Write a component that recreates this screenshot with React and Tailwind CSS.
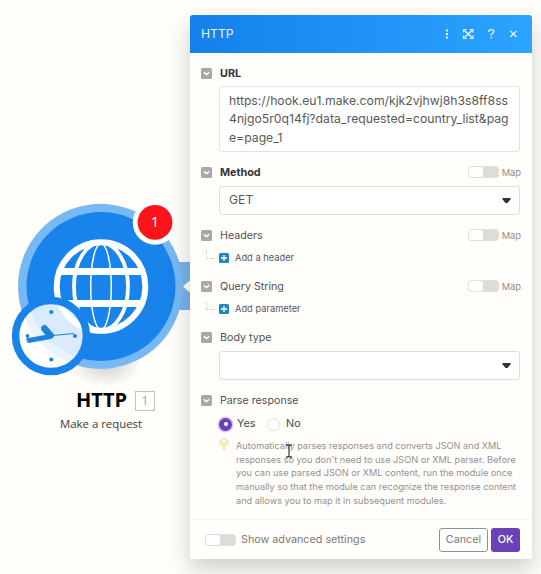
import React from 'react';

function Chevron() {
  return (
    <svg className="mr-2 h-[11px] w-[11px] shrink-0" viewBox="0 0 11 11">
      <rect width="11" height="11" rx="1.6" fill="#aaa8a6" />
      <path d="M2.8 4.4 5.5 6.6 8.2 4.4" fill="none" stroke="#fff" strokeWidth="1.4" />
    </svg>
  );
}

function Toggle() {
  return (
    <span className="flex h-[12px] w-[31px] shrink-0 rounded-[3px] border border-[#e2e0de] bg-[#dddcda]">
      <span className="h-full w-[14px] rounded-[2px] bg-white" />
    </span>
  );
}

function Label({ text, bold, map }) {
  return (
    <div className="flex h-[14px] items-center pl-[11px] pr-[11px]">
      <Chevron />
      <span className={bold ? 'pt-[2px] text-[10.8px] leading-[14px] font-bold text-[#333]' : 'pt-[2px] text-[10.7px] leading-[14px] text-[#53514f]'}>{text}</span>
      {map && (
        <span className="ml-auto flex items-center gap-[3px] text-[9.3px] text-[#918f8d]">
          <Toggle />
          <span className="pt-px">Map</span>
        </span>
      )}
    </div>
  );
}

function SelectBox({ value }) {
  return (
    <div className="ml-[29px] mr-[12px] mt-[7px] flex h-[29px] items-center justify-between rounded-[3px] border border-[#e3dcda] bg-white pl-[9px] pr-[8px] text-[12.2px] text-[#5b5957]">
      <span>{value}</span>
      <svg className="h-[5px] w-[9px]" viewBox="0 0 9 5">
        <path d="M.5 0h8v1.300L5.500 5h-2L.5 1.300z" fill="#333" />
      </svg>
    </div>
  );
}

function AddRow({ text }) {
  return (
    <div className="mt-[8px] flex h-[15px] items-center pl-[16px] text-[9.3px] text-[#5a5856]">
      <span className="mb-[7px] h-[9px] w-[8px] border-b border-l border-dotted border-[#cfcbc8]" />
      <svg className="ml-[5px] mr-[6px] h-[10px] w-[10px]" viewBox="0 0 10 10">
        <rect width="10" height="10" rx="1.5" fill="#2087bd" />
        <path d="M5 2v6M2 5h6" stroke="#fff" strokeWidth="1.3" />
      </svg>
      {text}
    </div>
  );
}

function HeaderIcons() {
  return (
    <svg className="h-[14px] w-[78px]" viewBox="0 0 78 14" fill="none" stroke="#e8f6ff">
      <g fill="#e8f6ff" stroke="none">
        <rect x="3" y="2.500" width="2" height="2" />
        <rect x="3" y="6" width="2" height="2" />
        <rect x="3" y="9.500" width="2" height="2" />
      </g>
      <path d="M20.500 5.500V2.500H23.700M26.900 2.500H29.900V5.500M29.900 8.500v3h-3M23.700 11.500h-3.200V8.500" strokeWidth="1.200" />
      <path d="M21.500 3.500l7.400 7M28.900 3.500l-7.400 7" strokeWidth="1.500" />
      <path d="M45.600 4.800c.2-1.500 1.200-2.200 2.500-2.200 1.500 0 2.600.8 2.600 2.100 0 1.800-2.600 1.800-2.600 4M48.100 10v1.600" strokeWidth="1.400" />
      <path d="m67.300 3.900 6.100 6.100M73.400 3.900 67.300 10" strokeWidth="1.300" />
    </svg>
  );
}

function NodeGraphic() {
  return (
    <svg className="block h-[389px] w-[191px]" viewBox="0 0 191 389">
      <defs>
        <radialGradient id="shade">
          <stop offset="0" stopColor="#555" stopOpacity=".28" />
          <stop offset="1" stopColor="#555" stopOpacity="0" />
        </radialGradient>
      </defs>
      <ellipse cx="106" cy="364" rx="36" ry="23" fill="url(#shade)" />
      <path d="M174 262h17v18l-8 6.500 8 6.500v17h-17z" fill="#76b3ea" />
      <path d="M191 279.500v14l-8-7z" fill="#fffefb" />
      <circle cx="100.500" cy="286.300" r="82.500" fill="#77b9f4" />
      <circle cx="101" cy="286.500" r="74.500" fill="#1783eb" />
      <g fill="none" stroke="#fff">
        <circle cx="101" cy="286.500" r="44.300" strokeWidth="6" />
        <ellipse cx="101" cy="286.500" rx="27" ry="44" strokeWidth="3.800" />
        <ellipse cx="101" cy="286.500" rx="10.300" ry="43" strokeWidth="1.500" />
        <path d="M59 271.500h84M59 303.500h84" strokeWidth="7" />
      </g>
      <circle cx="155" cy="222.500" r="22.300" fill="#fff" />
      <circle cx="155" cy="222.300" r="17.400" fill="#fb151b" />
      <text x="155" y="227" textAnchor="middle" fontSize="15" fill="#fff" fontFamily="Open Sans, Noto Sans, sans-serif">1</text>
      <circle cx="51" cy="336" r="35.400" fill="#fff" fillOpacity=".84" stroke="#1783eb" strokeWidth="7.500" />
      <g fill="#1b82de" stroke="#1b82de">
        <circle cx="51.300" cy="312" r="2" stroke="none" />
        <circle cx="51.300" cy="359.600" r="2" stroke="none" />
        <path d="M26.500 338.800 46 335.200 41.500 329.500Q41 325 45.500 325.200L53.500 334.200Q54 338 51 338.600L28 342.700Z" strokeWidth=".8" strokeLinejoin="round" />
        <path d="M53 335.500l21-2" strokeWidth="1.100" />
        <circle cx="27.500" cy="336" r="1.900" stroke="none" />
        <circle cx="75" cy="336" r="2.100" stroke="none" />
      </g>
    </svg>
  );
}

const hint = [
  'Automatically parses responses and converts JSON and XML',
  "responses so you don't need to use JSON or XML parser. Before",
  'you can use parsed JSON or XML content, run the module once',
  'manually so that the module can recognize the response content',
  'and allows you to map it in subsequent modules.',
];

export default function App() {
  return (
    <div className="flex h-[574px] w-[541px] overflow-hidden bg-[#fffefb] font-['Inter','Liberation_Sans',sans-serif]">
      <div className="w-[190px] shrink-0 font-['Open_Sans','Noto_Sans',sans-serif]">
        <NodeGraphic />
        <div className="flex h-[22px] items-center pl-[76px]">
          <span className="text-[20px] font-bold text-black">HTTP</span>
          <span className="ml-[8px] mt-[2px] flex h-[20px] w-[20px] items-center justify-center border border-[#c4c2c0] text-[13px] text-[#aaa8a6]">1</span>
        </div>
        <div className="mt-[3px] pl-[60px] text-[11.4px] leading-[19px] text-[#3c3a38]">Make a request</div>
      </div>

      <div className="relative mt-[15px] flex h-[544px] w-[342px] shrink-0 flex-col rounded-t-[3px] bg-[#fffefb] shadow-[0_10px_22px_rgba(60,60,50,0.25)]">
        <div className="flex h-[38px] shrink-0 items-center justify-between rounded-t-[3px] bg-linear-to-r from-[#1480ec] to-[#2ba4ff] pl-[11px] pr-[11px] text-[12.2px] text-[#e4f4ff]">
          <span>HTTP</span>
          <HeaderIcons />
        </div>

        <div className="pt-[13px]">
          <Label text="URL" bold />
          <div className="ml-[29px] mr-[12px] mt-[6px] h-[66px] rounded-[3px] border border-[#e8e1df] bg-white pl-[9px] pt-[5px] text-[12.21px] leading-[18.4px] whitespace-nowrap text-[#5b5957]">
            <div>https://hook.eu1.make.com/kjk2vjhwj8h3s8ff8ss</div>
            <div>4njgo5r0q14fj?data_requested=country_list&amp;pag</div>
            <div>e=page_1</div>
          </div>
        </div>

        <div className="pt-[13px]">
          <Label text="Method" bold map />
          <SelectBox value="GET" />
        </div>
        <div className="pt-[13px]">
          <Label text="Headers" map />
          <AddRow text="Add a header" />
        </div>
        <div className="pt-[14px]">
          <Label text="Query String" map />
          <AddRow text="Add parameter" />
        </div>
        <div className="pt-[14px]">
          <Label text="Body type" />
          <SelectBox value="" />
        </div>

        <div className="pt-[13px]">
          <Label text="Parse response" />
          <div className="mt-[9px] flex h-[16px] items-center pl-[29px] text-[10.8px] text-[#4c4a48]">
            <span className="flex h-[13px] w-[13px] items-center justify-center rounded-full bg-[#6b42b5] shadow-[0_0_0_1.5px_#dcc9f5]">
              <span className="h-[4px] w-[4px] rounded-full bg-white" />
            </span>
            <span className="ml-[5px] w-[30px]">Yes</span>
            <span className="h-[13px] w-[13px] rounded-full border border-[#dedbd9] bg-white" />
            <span className="ml-[6px]">No</span>
          </div>
          <div className="mt-[7px] flex pl-[29px] text-[9.16px] leading-[13.7px] whitespace-nowrap text-[#93918f]">
            <svg className="-mt-px mr-[7px] h-[13px] w-[10px] shrink-0" viewBox="0 0 10 13" fill="#fff8d0" stroke="#eadb94">
              <path d="M3.3 8.7C2.6 7 1 6.5 1 4.5 1 2.3 2.7 1 5 1s4 1.300 4 3.500c0 2-1.600 2.500-2.300 4.200zM3.500 10.300h3M4 12h2M5 8V5.500M3.500 4.500 5 5.700l1.500-1.200" />
            </svg>
            <div>
              {hint.map((line) => <div key={line}>{line}</div>)}
            </div>
          </div>
        </div>

        <div className="mt-auto flex h-[40px] items-center border-t border-[#f7f3ef] pl-[15px] pr-[12px] text-[10.75px] text-[#7b7977]">
          <Toggle />
          <span className="ml-[5px] pt-[2px]">Show advanced settings</span>
          <span className="ml-auto flex h-[24px] w-[49px] items-center justify-center rounded-[3px] border border-[#92908f] bg-white pt-[2px]">Cancel</span>
          <span className="ml-[3px] flex h-[24px] w-[29px] items-center justify-center rounded-[3px] bg-[#6b42b8] pt-[2px] font-medium text-white">OK</span>
        </div>

        <svg className="absolute left-[95px] top-[429px] h-[14px] w-[8px]" viewBox="0 0 8 14" fill="none" stroke="#444" strokeWidth="1.3">
          <path d="M1 1h2l1 1 1-1h2M4 2v10M1 13h2l1-1 1 1h2" />
        </svg>
      </div>
    </div>
  );
}
